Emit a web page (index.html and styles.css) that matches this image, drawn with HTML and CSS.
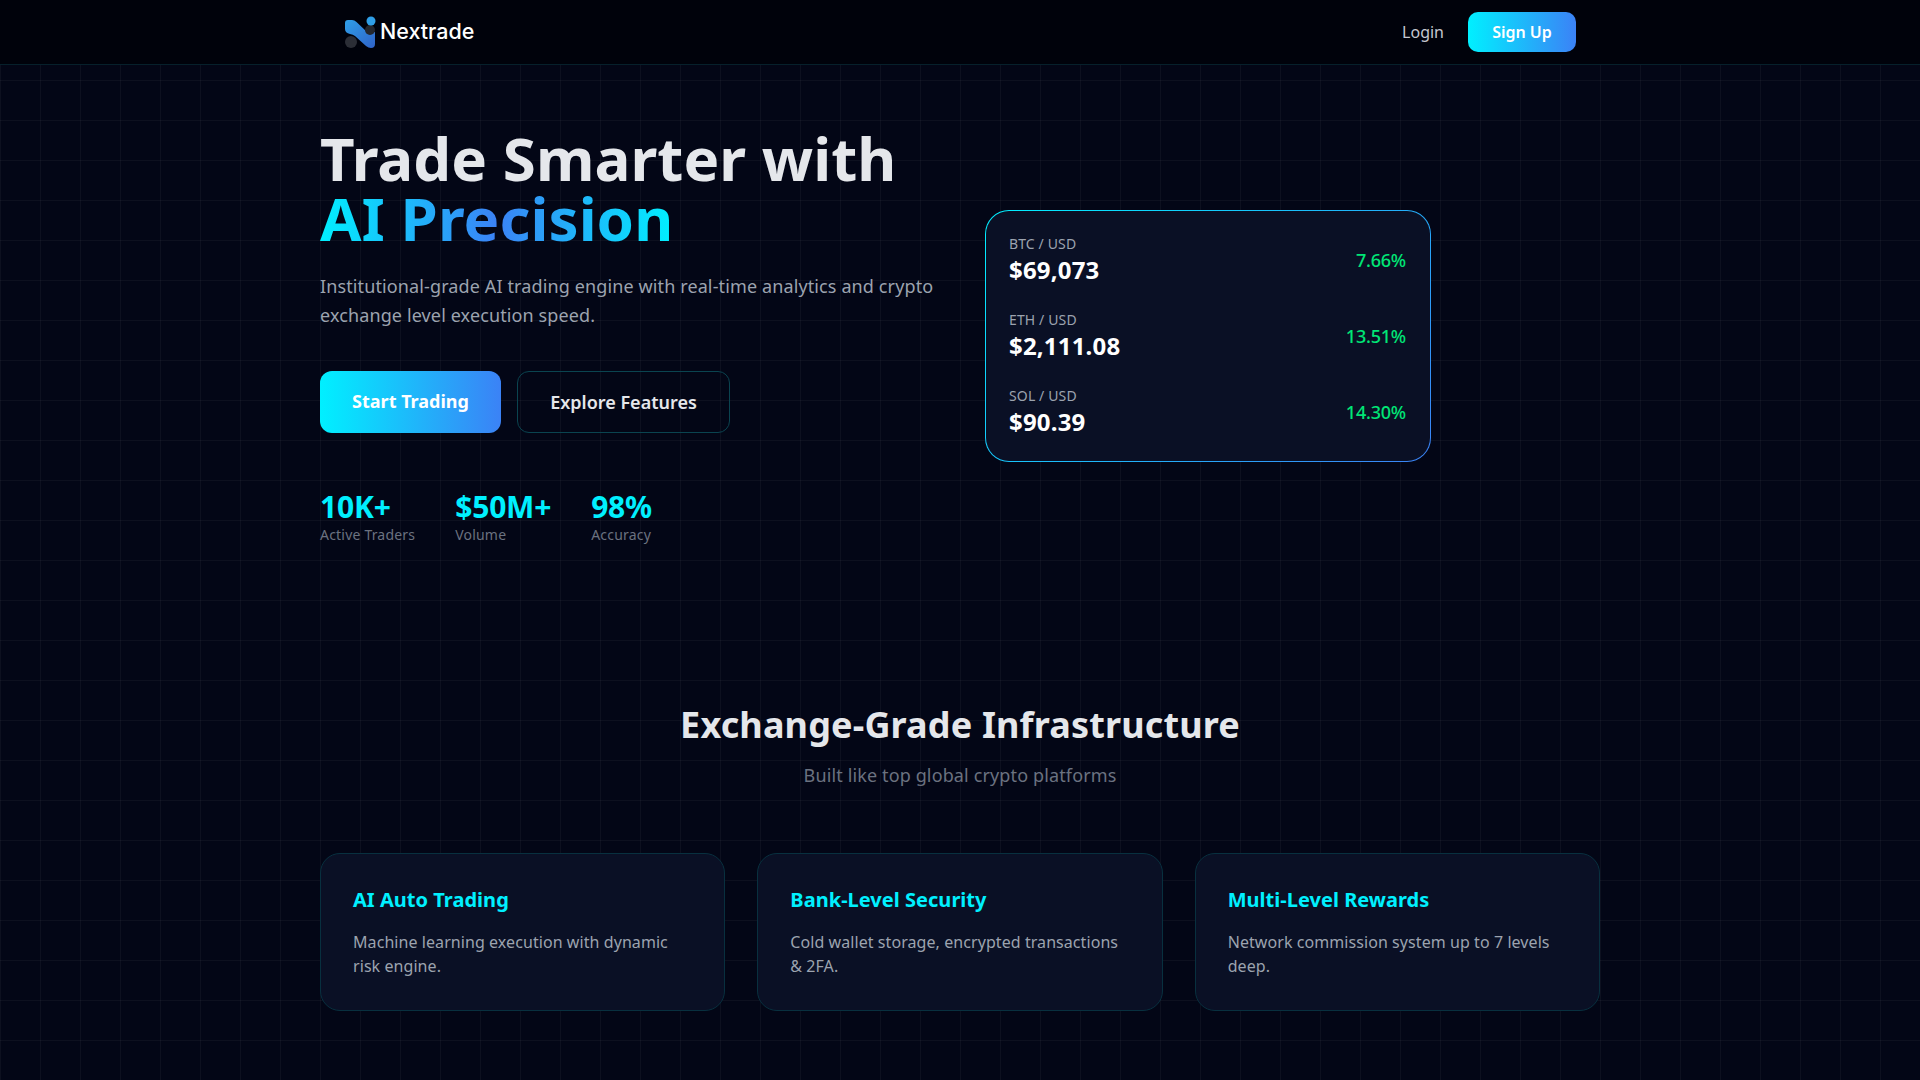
FILE: index.html
```html
<!DOCTYPE html>
<html lang="en">
<head>
  <meta charset="UTF-8">
  <meta name="viewport" content="width=device-width, initial-scale=1.0">
  <title>Nextrade</title>
  <link rel="stylesheet" href="styles.css">
</head>
<body>
  <header class="navbar">
    <div class="navbar-inner">
      <a class="logo" href="#">
        <svg class="logo-mark" width="34" height="34" viewBox="0 0 34 34">
          <defs>
            <linearGradient id="logo-blue" x1="0" y1="0" x2="1" y2="1">
              <stop offset="0" stop-color="#2f9fe8"/>
              <stop offset="1" stop-color="#2f62c8"/>
            </linearGradient>
          </defs>
          <circle cx="7" cy="27" r="6" fill="#2b2e36"/>
          <path d="M1 8 Q1 5 4 5 L8 5 Q10.500 5 12.500 7 L23 17 L31 17 L31 29 Q31 33 27 33 Q24.500 33 22 31 L11 21 Q9 19.500 6 19 Q1 18 1 14 Z" fill="url(#logo-blue)"/>
          <circle cx="26" cy="15" r="5" fill="#24272e"/>
          <circle cx="27" cy="6" r="4.500" fill="#2f9fe8"/>
        </svg>
        <span class="logo-text">Nextrade</span>
      </a>
      <nav class="nav-links">
        <a class="nav-login" href="#">Login</a>
        <a class="nav-signup" href="#">Sign Up</a>
      </nav>
    </div>
  </header>

  <main class="container">
    <section class="hero">
      <div class="hero-left">
        <h1>Trade Smarter with <span class="gradient-text">AI Precision</span></h1>
        <p class="hero-text">Institutional-grade AI trading engine with real-time analytics and crypto exchange level execution speed.</p>
        <div class="hero-buttons">
          <a class="btn btn-primary" href="#">Start Trading</a>
          <a class="btn btn-outline" href="#">Explore Features</a>
        </div>
        <div class="stats">
          <div>
            <div class="stat-value">10K+</div>
            <div class="stat-label">Active Traders</div>
          </div>
          <div>
            <div class="stat-value">$50M+</div>
            <div class="stat-label">Volume</div>
          </div>
          <div>
            <div class="stat-value">98%</div>
            <div class="stat-label">Accuracy</div>
          </div>
        </div>
      </div>

      <div class="ticker-card">
        <div class="ticker-row">
          <div>
            <div class="ticker-pair">BTC / USD</div>
            <div class="ticker-price">$69,073</div>
          </div>
          <div class="ticker-change">7.66%</div>
        </div>
        <div class="ticker-row">
          <div>
            <div class="ticker-pair">ETH / USD</div>
            <div class="ticker-price">$2,111.08</div>
          </div>
          <div class="ticker-change">13.51%</div>
        </div>
        <div class="ticker-row">
          <div>
            <div class="ticker-pair">SOL / USD</div>
            <div class="ticker-price">$90.39</div>
          </div>
          <div class="ticker-change">14.30%</div>
        </div>
      </div>
    </section>

    <section class="features">
      <h2>Exchange-Grade Infrastructure</h2>
      <p class="features-sub">Built like top global crypto platforms</p>
      <div class="feature-grid">
        <div class="feature-card">
          <h3>AI Auto Trading</h3>
          <p>Machine learning execution with dynamic risk engine.</p>
        </div>
        <div class="feature-card">
          <h3>Bank-Level Security</h3>
          <p>Cold wallet storage, encrypted transactions &amp; 2FA.</p>
        </div>
        <div class="feature-card">
          <h3>Multi-Level Rewards</h3>
          <p>Network commission system up to 7 levels deep.</p>
        </div>
      </div>
    </section>
  </main>
</body>
</html>
```

FILE: styles.css
```css
* {
  box-sizing: border-box;
}

html,
body {
  height: 100%;
}

body {
  margin: 0;
  overflow: hidden;
  font-family: "Noto Sans", sans-serif;
  color: #e5e7eb;
  background-color: #030616;
  background-image:
    linear-gradient(rgba(255, 255, 255, 0.04) 1px, transparent 1px),
    linear-gradient(90deg, rgba(255, 255, 255, 0.04) 1px, transparent 1px);
  background-size: 40px 40px;
}

a {
  text-decoration: none;
  color: inherit;
}

.navbar {
  height: 65px;
  background-color: #00020b;
  border-bottom: 1px solid #06202b;
}

.navbar-inner {
  max-width: 1280px;
  height: 64px;
  margin: 0 auto;
  padding: 0 24px;
  display: flex;
  align-items: center;
  justify-content: space-between;
}

.logo {
  display: flex;
  align-items: center;
  gap: 2px;
}

.logo-text {
  padding-bottom: 2px;
  font-family: "Inter", sans-serif;
  font-size: 21.500px;
  font-weight: 500;
  color: #fff;
}

.nav-links {
  display: flex;
  align-items: center;
  gap: 24px;
}

.nav-login {
  font-size: 16px;
  color: #c5c8d0;
}

.nav-signup {
  width: 108px;
  height: 40px;
  display: flex;
  align-items: center;
  justify-content: center;
  font-size: 16px;
  font-weight: 600;
  color: #fff;
  border-radius: 10px;
  background: linear-gradient(90deg, #00f0ff, #3b82f6);
}

.container {
  max-width: 1280px;
  margin: 0 auto;
}

.hero {
  padding-top: 63px;
  display: grid;
  grid-template-columns: 633px 446px;
  column-gap: 32px;
  align-items: center;
}

h1 {
  margin: 0;
  font-size: 60px;
  line-height: 60px;
  font-weight: 700;
  letter-spacing: 0.05px;
}

.gradient-text {
  display: inline-block;
  background: linear-gradient(90deg, #00f0ff, #3b82f6, #00f0ff);
  -webkit-background-clip: text;
  background-clip: text;
  color: transparent;
}

.hero-text {
  margin: 24px 0 0;
  font-size: 18px;
  line-height: 29.250px;
  letter-spacing: 0.12px;
  color: #9ca3af;
}

.hero-buttons {
  margin-top: 40.500px;
  display: flex;
  gap: 16px;
}

.btn {
  height: 62px;
  display: flex;
  align-items: center;
  justify-content: center;
  border-radius: 12px;
  font-size: 18px;
  font-weight: 600;
}

.btn-primary {
  width: 181px;
  padding-bottom: 2px;
  font-weight: 700;
  color: #fff;
  background: linear-gradient(90deg, #00f0ff, #3b82f6);
}

.btn-outline {
  width: 213px;
  color: #e5e7eb;
  border: 1px solid #0a4450;
}

.stats {
  margin-top: 56px;
  display: flex;
  gap: 40px;
}

.stat-value {
  font-size: 30px;
  line-height: 36px;
  font-weight: 700;
  letter-spacing: -0.2px;
  color: #00f0ff;
}

.stat-label {
  font-size: 14px;
  line-height: 20px;
  letter-spacing: 0.2px;
  color: #6b7280;
}

.ticker-card {
  margin-top: -1px;
  padding: 23px;
  display: flex;
  flex-direction: column;
  gap: 24px;
  border: 1px solid transparent;
  border-radius: 24px;
  background:
    linear-gradient(#0a1025, #0a1025) padding-box,
    linear-gradient(135deg, #00f0ff, #3b82f6) border-box;
}

.ticker-row {
  display: flex;
  align-items: center;
  justify-content: space-between;
}

.ticker-pair {
  font-size: 14px;
  line-height: 20px;
  letter-spacing: 0.13px;
  color: #9ca3af;
}

.ticker-price {
  font-size: 24px;
  line-height: 32px;
  font-weight: 700;
  letter-spacing: 0.18px;
  color: #fff;
}

.ticker-change {
  padding-right: 1px;
  font-size: 18px;
  font-weight: 500;
  letter-spacing: -0.2px;
  color: #00e676;
}

.features {
  padding-top: 160px;
}

h2 {
  margin: 0;
  font-size: 36px;
  line-height: 40px;
  font-weight: 700;
  letter-spacing: 0.15px;
  text-align: center;
}

.features-sub {
  margin: 16px 0 0;
  font-size: 18px;
  line-height: 28px;
  letter-spacing: 0.13px;
  text-align: center;
  color: #6b7280;
}

.feature-grid {
  margin-top: 64px;
  display: grid;
  grid-template-columns: repeat(3, 1fr);
  gap: 32px;
}

.feature-card {
  padding: 32px;
  border: 1px solid #08303f;
  border-radius: 20px;
  background-color: #0a1025;
}

.feature-card h3 {
  margin: 0;
  font-size: 20px;
  line-height: 28px;
  font-weight: 700;
  letter-spacing: 0.03px;
  color: #00f0ff;
}

.feature-card p {
  margin: 16px 0 0;
  font-size: 16px;
  line-height: 24px;
  letter-spacing: 0.07px;
  color: #9ca3af;
}
```
